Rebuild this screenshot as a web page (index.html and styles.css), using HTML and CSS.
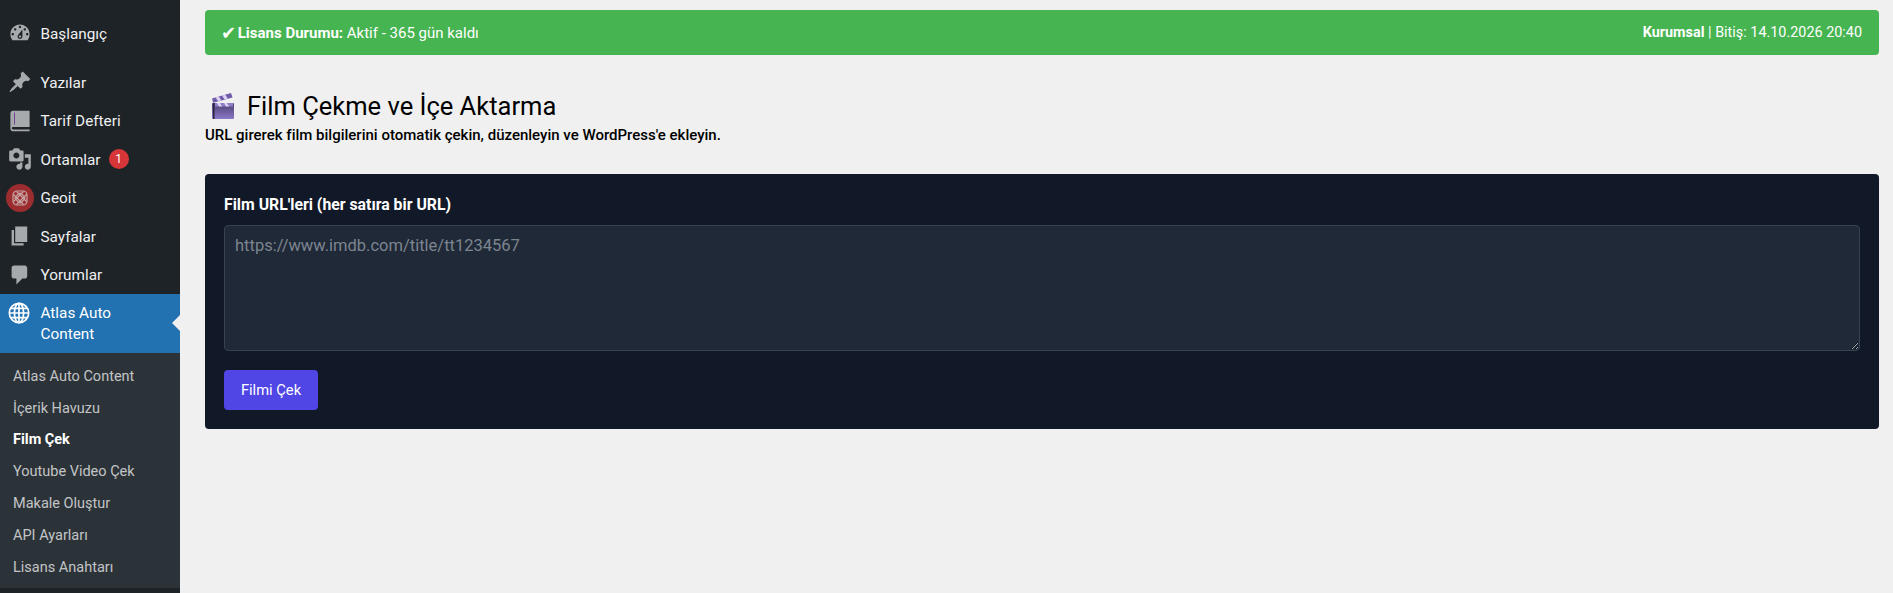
FILE: index.html
```html
<!DOCTYPE html>
<html lang="tr">
<head>
    <meta charset="UTF-8">
    <title>Film Çek</title>
    <link rel="stylesheet" href="styles.css">
</head>
<body>
    <div class="layout">
        <!-- Sol menu -->
        <nav class="sidebar">
            <ul class="menu">
                <li class="menu-item first">
                    <svg class="icon" viewBox="0 0 20 20"><path d="M3.76 16h12.48c1.1-1.37 1.76-3.11 1.76-5 0-4.42-3.58-8-8-8s-8 3.58-8 8c0 1.89.66 3.63 1.76 5zM10 4c.55 0 1 .45 1 1s-.45 1-1 1-1-.45-1-1 .45-1 1-1zM6 6c.55 0 1 .45 1 1s-.45 1-1 1-1-.45-1-1 .45-1 1-1zm8 0c.55 0 1 .45 1 1s-.45 1-1 1-1-.45-1-1 .45-1 1-1zm-5.37 5.55L12 7v6c0 1.1-.9 2-2 2s-2-.9-2-2c0-.57.24-1.08.63-1.45zM4 10c.55 0 1 .45 1 1s-.45 1-1 1-1-.45-1-1 .45-1 1-1zm12 0c.55 0 1 .45 1 1s-.45 1-1 1-1-.45-1-1 .45-1 1-1zm-5 3c0-.55-.45-1-1-1s-1 .45-1 1 .45 1 1 1 1-.45 1-1z" fill-rule="evenodd"/></svg>
                    <span>Başlangıç</span>
                </li>
                <li class="menu-item">
                    <svg class="icon" viewBox="0 0 20 20"><path d="M10.44 3.02l1.82-1.82 6.36 6.35-1.83 1.82c-1.05-.68-2.48-.57-3.41.36l-.75.75c-.92.93-1.04 2.35-.35 3.41l-1.83 1.82-2.41-2.41-2.8 2.79c-.42.42-3.38 2.71-3.8 2.29s1.86-3.39 2.28-3.81l2.79-2.79L4.1 9.36l1.83-1.82c1.05.69 2.48.57 3.4-.36l.75-.75c.93-.92 1.05-2.35.36-3.41z"/></svg>
                    <span>Yazılar</span>
                </li>
                <li class="menu-item">
                    <svg class="icon" viewBox="0 0 20 20"><path d="M2 3.5C2 2.4 2.9 1.5 4 1.5h14v13.6H4.4c-.8 0-1.2.4-1.2 1s.4 1 1.2 1H18v1.4H4c-1.1 0-2-.9-2-2z"/><rect x="5" y="3" width=".7" height="10" fill="#6b2c91"/></svg>
                    <span>Tarif Defteri</span>
                </li>
                <li class="menu-item">
                    <svg class="icon" viewBox="0 0 20 20"><path d="M13 11V4c0-.55-.45-1-1-1h-1.67L9 1H5L3.67 3H2c-.55 0-1 .45-1 1v7c0 .55.45 1 1 1h10c.55 0 1-.45 1-1zM7 4.5c1.38 0 2.5 1.12 2.5 2.5S8.38 9.5 7 9.5 4.5 8.38 4.5 7 5.62 4.5 7 4.5zM14 6h5v10.5c0 1.38-1.12 2.5-2.5 2.5S14 17.88 14 16.5s1.12-2.5 2.5-2.5c.17 0 .34.02.5.05V9h-3V6zm-4 8.05V13h2v3.5c0 1.38-1.12 2.5-2.5 2.5S7 17.88 7 16.5 8.12 14 9.5 14c.17 0 .34.02.5.05z" fill-rule="evenodd"/></svg>
                    <span>Ortamlar</span>
                    <span class="badge">1</span>
                </li>
                <li class="menu-item">
                    <svg class="geoit" viewBox="0 0 28 28">
                        <circle cx="14" cy="14" r="14" fill="#9b2c2f"/>
                        <g fill="none" stroke="#c9a5a5" stroke-width="1.2">
                            <rect x="7" y="7" width="14" height="14" rx="4"/>
                            <rect x="10" y="10" width="8" height="8" rx="2" transform="rotate(45 14 14)"/>
                            <path d="M7.5 10.5 17.5 20.5M20.5 10.5 10.5 20.5M10.5 7.5 20.5 17.5M17.5 7.5 7.5 17.5"/>
                        </g>
                    </svg>
                    <span>Geoit</span>
                </li>
                <li class="menu-item">
                    <svg class="icon" viewBox="0 0 20 20"><path d="M6 15V2h10v13H6zm-1 1h8v2H3V5h2v11z"/></svg>
                    <span>Sayfalar</span>
                </li>
                <li class="menu-item">
                    <svg class="icon" viewBox="0 0 20 20"><path d="M5 2h9c1.1 0 2 .9 2 2v7c0 1.1-.9 2-2 2h-2l-5 5v-5H5c-1.1 0-2-.9-2-2V4c0-1.1.9-2 2-2z"/></svg>
                    <span>Yorumlar</span>
                </li>
                <li class="menu-item current">
                    <svg class="globe" viewBox="0 0 22 22">
                        <g fill="none" stroke="#fff" stroke-width="1.7">
                            <circle cx="11" cy="11" r="9.7"/>
                            <ellipse cx="11" cy="11" rx="4.6" ry="9.7"/>
                            <path d="M11 1.3v19.4M1.3 11h19.4M2.8 6.4h16.4M2.8 15.6h16.4"/>
                        </g>
                    </svg>
                    <span>Atlas Auto Content</span>
                </li>
            </ul>
            <ul class="submenu">
                <li>Atlas Auto Content</li>
                <li>İçerik Havuzu</li>
                <li class="active">Film Çek</li>
                <li>Youtube Video Çek</li>
                <li>Makale Oluştur</li>
                <li>API Ayarları</li>
                <li>Lisans Anahtarı</li>
            </ul>
        </nav>

        <main class="content">
            <div class="license">
                <div><span class="check">✔</span> <strong>Lisans Durumu:</strong> Aktif - 365 gün kaldı</div>
                <div class="license-end"><strong>Kurumsal</strong> | Bitiş: 14.10.2026 20:40</div>
            </div>

            <div class="page-title">
                <svg class="clapper" viewBox="0 0 22 26">
                    <defs>
                        <linearGradient id="clapperFill" x1="0" y1="0" x2="0" y2="1">
                            <stop offset="0" stop-color="#4e4170"/>
                            <stop offset="1" stop-color="#8a78c6"/>
                        </linearGradient>
                    </defs>
                    <path d="M0 5.5 19 0l1.5 4.5L1.2 9.8z" fill="#6f5ca8"/>
                    <path d="m3.5 4.4 2.6 3.8 3.2-.9L6.7 3.5zM10 2.6l2.6 3.8 3.2-.9-2.6-3.8z" fill="#dcd3f2"/>
                    <rect x="0" y="10" width="22" height="16" rx="1" fill="url(#clapperFill)"/>
                    <rect x="1" y="10" width="1.5" height="16" fill="#2c2440"/>
                    <path d="M3 10h18v3.5H3z" fill="#8f7fc9"/>
                    <path d="m5 10 2 3.5h3L8 10zm7 0 2 3.5h3L15 10z" fill="#dcd3f2"/>
                </svg>
                <h1>Film Çekme ve İçe Aktarma</h1>
            </div>
            <p class="subtitle">URL girerek film bilgilerini otomatik çekin, düzenleyin ve WordPress'e ekleyin.</p>

            <form class="card">
                <label for="urls">Film URL'leri (her satıra bir URL)</label>
                <textarea id="urls" placeholder="https://www.imdb.com/title/tt1234567"></textarea>
                <button type="button">Filmi Çek</button>
            </form>
        </main>
    </div>
</body>
</html>
```

FILE: styles.css
```css
* {
    box-sizing: border-box;
}

html, body {
    height: 100%;
}

body {
    margin: 0;
    background-color: #f0f0f1;
    font-family: Roboto, "Liberation Sans", sans-serif;
    font-size: 15px;
    color: #000;
    overflow: hidden;
}

.layout {
    display: flex;
    height: 593px;
}

/* sol menu */
.sidebar {
    width: 180px;
    flex-shrink: 0;
    background-color: #1d2327;
    color: #f0f0f1;
}

.menu, .submenu {
    list-style: none;
    margin: 0;
    padding: 0;
}

.menu {
    padding-top: 14px;
}

.menu-item {
    display: flex;
    align-items: center;
    height: 38.5px;
    padding-left: 8px;
    font-size: 15.3px;
}

.menu-item.first {
    margin-bottom: 10.4px;
}

.menu-item > span:first-of-type {
    margin-left: 8.5px;
    padding-top: 1px;
}

.icon {
    width: 24px;
    height: 24px;
    fill: #a7aaad;
    flex-shrink: 0;
}

.geoit {
    width: 28px;
    height: 28px;
    margin-left: -2px;
    margin-right: -2px;
    flex-shrink: 0;
}

.globe {
    width: 22px;
    height: 22px;
    margin-right: 2px;
    margin-top: -21px;
    flex-shrink: 0;
}

.badge {
    display: inline-block;
    width: 20px;
    height: 20px;
    margin-left: 8px;
    border-radius: 50%;
    background-color: #d63638;
    color: #fff;
    font-size: 12px;
    line-height: 20px;
    text-align: center;
}

.menu-item.current {
    position: relative;
    height: 59px;
    background-color: #2271b1;
    color: #fff;
    line-height: 21px;
}

.menu-item.current span {
    width: 110px;
    padding-top: 2px;
}

.menu-item.current::after {
    content: "";
    position: absolute;
    right: 0;
    top: 21px;
    border: 8px solid transparent;
    border-right-color: #f0f0f1;
}

.submenu {
    height: 235px;
    padding-top: 8px;
    background-color: #2c3338;
    color: #c3c4c7;
    font-size: 14.5px;
}

.submenu li {
    height: 31.8px;
    line-height: 31.8px;
    padding-left: 13px;
}

.submenu .active {
    color: #fff;
    font-weight: 700;
}

/* conteudo */
.content {
    flex: 1;
    padding: 10px 14px 0 25px;
}

.license {
    display: flex;
    justify-content: space-between;
    align-items: center;
    height: 45px;
    padding: 0 17px 0 16px;
    background-color: #46b450;
    border-radius: 4px;
    color: #fff;
    font-size: 15px;
}

.license-end {
    font-size: 14.4px;
}

.check {
    display: inline-block;
    width: 13px;
    font-family: "DejaVu Sans", sans-serif;
    font-size: 18px;
    line-height: 1;
    vertical-align: -1px;
}

.page-title {
    display: flex;
    align-items: center;
    margin-top: 36px;
    height: 30px;
}

.clapper {
    width: 22px;
    height: 26px;
    margin-left: 7px;
    margin-right: 13px;
}

h1 {
    margin: 0;
    font-size: 25.5px;
    font-weight: 400;
    color: #000;
}

.subtitle {
    margin: 4px 0 0;
    font-size: 15px;
    font-weight: 500;
    line-height: 20px;
}

.card {
    margin-top: 29px;
    height: 255px;
    padding: 20px 19px;
    background-color: #111827;
    border-radius: 4px;
}

.card label {
    display: block;
    height: 31px;
    line-height: 22px;
    color: #fff;
    font-size: 15.8px;
    font-weight: 700;
}

.card textarea {
    display: block;
    width: 100%;
    height: 126px;
    padding: 10px 10px;
    background-color: #1f2937;
    border: 1px solid #374151;
    border-radius: 4px;
    color: #fff;
    font-family: inherit;
    font-size: 16.5px;
    line-height: 20px;
}

.card textarea::placeholder {
    color: #7d8590;
}

.card button {
    display: block;
    margin-top: 19px;
    width: 94px;
    height: 40px;
    border: none;
    border-radius: 4px;
    background-color: #4f46e5;
    color: #fff;
    font-family: inherit;
    font-size: 14.7px;
}
```
